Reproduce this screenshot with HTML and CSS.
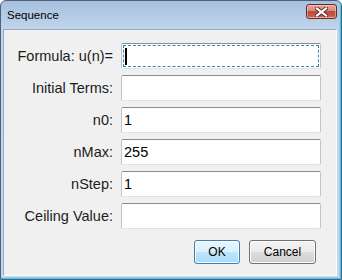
FILE: index.html
```html
<!DOCTYPE html>
<html>
<head>
  <title>Sequence</title>
  <link rel="stylesheet" href="styles.css">
</head>
<body>

  <div class="window">
    <div class="titlebar">
      <span class="title">Sequence</span>
      <div class="close-btn">
        <svg width="13" height="10" viewBox="0 0 13 10">
          <path d="M2 1.5 L11 8.5 M11 1.5 L2 8.5" stroke="#5a2a24" stroke-width="4" stroke-linecap="square"/>
          <path d="M2 1.5 L11 8.5 M11 1.5 L2 8.5" stroke="#ffffff" stroke-width="2.2" stroke-linecap="square"/>
        </svg>
      </div>
    </div>

    <div class="panel">
      <div class="form">
        <label>Formula: u(n)=</label>
        <div class="field focused"><span class="caret"></span></div>

        <label>Initial Terms:</label>
        <div class="field"></div>

        <label>n0:</label>
        <div class="field">1</div>

        <label>nMax:</label>
        <div class="field">255</div>

        <label>nStep:</label>
        <div class="field">1</div>

        <label>Ceiling Value:</label>
        <div class="field"></div>
      </div>

      <div class="buttons">
        <button class="btn btn-default">OK</button>
        <button class="btn">Cancel</button>
      </div>
    </div>
  </div>

</body>
</html>
```

FILE: styles.css
```css
body {
  margin: 0;
  font-family: "Liberation Sans", Arial, sans-serif;
}

.window {
  width: 342px;
  height: 280px;
  box-sizing: border-box;
  border: 1px solid #4f6179;
  border-radius: 6px 6px 0 0;
  background: linear-gradient(#a6c0de, #c0d5ec 28px, #c3d8ee);
  box-shadow: inset -1px -1px 0 #3ec4f0, inset -2px -2px 0 #92d7f2;
  display: flex;
  flex-direction: column;
}

.titlebar {
  height: 28px;
  display: flex;
  align-items: flex-start;
}

.title {
  font-size: 11.5px;
  color: #000;
  margin: 8px 0 0 6px;
}

.close-btn {
  margin: 3px 4px 0 auto;
  width: 29px;
  height: 13px;
  border: 1px solid #6b2b24;
  border-radius: 3px;
  background: linear-gradient(#e3a89d, #d68a7d 45%, #c24a3b 50%, #c4584a 85%, #d88a7c);
  box-shadow: inset 0 0 0 1px rgba(255, 220, 210, 0.45);
  display: flex;
  align-items: center;
  justify-content: center;
}

.panel {
  flex: 1;
  margin: 0 4px 3px 2px;
  background-color: #f0f0f0;
  border: 1px solid #fdfdfd;
  border-top-color: #96aac3;
  border-left-color: #96aac3;
  padding-top: 13px;
}

.form {
  display: grid;
  grid-template-columns: 109px 200px;
  grid-auto-rows: 26px;
  column-gap: 8px;
  row-gap: 6px;
}

.form label {
  font-size: 14.5px;
  color: #1c1c1c;
  text-align: right;
  align-self: center;
}

.field {
  box-sizing: border-box;
  background-color: #fff;
  border: 1px solid #c2c4c8;
  border-top-color: #8c8d90;
  border-bottom-color: #e0e2e5;
  border-radius: 2px;
  font-size: 14.5px;
  color: #000;
  padding-left: 2px;
  display: flex;
  align-items: center;
}

.field.focused {
  outline: 1px dashed #2f86b8;
  outline-offset: -3px;
}

.caret {
  width: 2px;
  height: 17px;
  margin-left: 1px;
  background-color: #000;
}

.buttons {
  display: flex;
  justify-content: flex-end;
  gap: 9px;
  margin-top: 11px;
  padding-right: 20px;
}

.btn {
  height: 24px;
  width: 67px;
  padding: 0;
  font-family: "Liberation Sans", Arial, sans-serif;
  font-size: 12px;
  color: #000;
  border: 1px solid #707070;
  border-radius: 3px;
  background: linear-gradient(#f2f2f2, #ebebeb 50%, #dddddd 50%, #cfcfcf);
  box-shadow: inset 0 0 0 1px #fcfcfc;
}

.btn-default {
  width: 46px;
  border-color: #3c7fb1;
  background: linear-gradient(#eaf6fd, #d9f0fc 50%, #bee6fd 50%, #a7d9f5);
}
```
